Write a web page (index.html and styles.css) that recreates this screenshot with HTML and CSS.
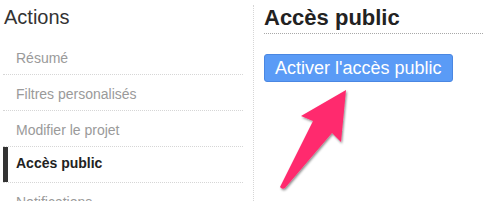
FILE: index.html
```html
<!DOCTYPE html>
<html lang="fr">
<head>
    <meta charset="UTF-8">
    <title>Accès public</title>
    <link rel="stylesheet" href="styles.css">
</head>
<body>
    <div class="layout">
        <aside class="sidebar">
            <h2>Actions</h2>
            <ul class="menu">
                <li><a href="#">Résumé</a></li>
                <li><a href="#">Filtres personalisés</a></li>
                <li><a href="#">Modifier le projet</a></li>
                <li class="active"><a href="#">Accès public</a></li>
                <li><a href="#">Notifications</a></li>
            </ul>
        </aside>

        <main class="content">
            <h1>Accès public</h1>
            <button type="button" class="btn-primary">Activer l'accès public</button>
        </main>
    </div>

    <!-- annotation arrow drawn over the page -->
    <svg class="callout-arrow" viewBox="0 0 483 201" xmlns="http://www.w3.org/2000/svg">
        <defs>
            <filter id="arrowShadow" x="-20%" y="-20%" width="140%" height="140%">
                <feDropShadow dx="1" dy="1.5" stdDeviation="1" flood-color="#000" flood-opacity="0.45"/>
            </filter>
        </defs>
        <path d="M346 90 L341 142 L332 133 L285 188 Q282 190 280 187 L313 121 L301 116 Z" fill="#ff2b6e" filter="url(#arrowShadow)"/>
    </svg>
</body>
</html>
```

FILE: styles.css
```css
/* base */
body, html {
    margin: 0;
    padding: 0;
    background: #fff;
    font-family: "Liberation Sans", Arial, Helvetica, sans-serif;
    color: #333;
    height: 100%;
    overflow: hidden;
}

.layout {
    display: flex;
    align-items: flex-start;
}

/* sidebar */
.sidebar {
    width: 240px;
    margin-left: 3px;
    flex-shrink: 0;
}

.sidebar h2 {
    margin: 5px 0 10px 1px;
    font-size: 20px;
    line-height: 24px;
    font-weight: normal;
    color: #333;
}

.menu {
    list-style: none;
    margin: 0;
    padding: 0;
}

.menu li {
    border-bottom: 1px dotted #d6d6d6;
}

.menu li a {
    display: block;
    padding: 9px 0 6px 13px;
    font-size: 14px;
    line-height: 20px;
    color: #9a9a9a;
    text-decoration: none;
}

.menu li.active a {
    padding: 6px 0 9px 8px;
    border-left: 5px solid #333;
    color: #222;
    font-weight: bold;
}

/* main panel */
.content {
    flex-grow: 1;
    margin: 5px 0 0 10px;
    padding: 0 0 0 10px;
    border-left: 1px dotted #d6d6d6;
    height: 196px;
}

.content h1 {
    margin: 0;
    padding-bottom: 2px;
    font-size: 22px;
    line-height: 26px;
    font-weight: bold;
    color: #222;
    border-bottom: 1px dotted #a8a8a8;
}

.btn-primary {
    margin-top: 20px;
    padding: 3px 10px;
    font-family: inherit;
    font-size: 18px;
    line-height: 20px;
    color: #fff;
    background-color: #5a9bf6;
    border: 1px solid #4a87e2;
    border-radius: 3px;
    cursor: pointer;
}

.callout-arrow {
    position: absolute;
    top: 0;
    left: 0;
    width: 483px;
    height: 201px;
    pointer-events: none;
}
```
